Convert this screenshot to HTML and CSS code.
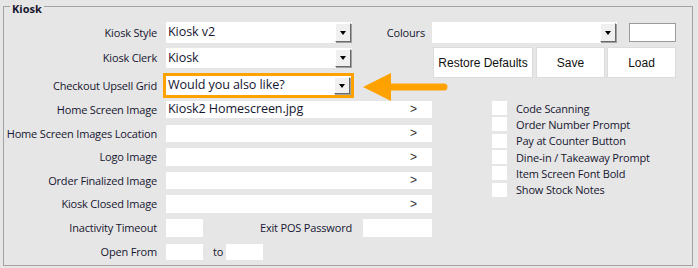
FILE: index.html
```html
<!DOCTYPE html>
<html lang="en">

<head>
  <meta charset="UTF-8">
  <title>Kiosk</title>
  <link rel="stylesheet" href="styles.css">
</head>

<body>

  <div class="group">
    <div class="group__title">Kiosk</div>

    <div class="form">
      <!-- row 1 -->
      <div class="form__label row-1">Kiosk Style</div>
      <div class="form__ctrl row-1">
        <div class="select"><span class="select__text">Kiosk v2</span><span class="select__btn"></span></div>
        <span class="form__side-label">Colours</span>
      </div>
      <div class="form__right row-1">
        <div class="select select_colours"><span class="select__text"></span><span class="select__btn"></span></div>
        <div class="swatch"></div>
      </div>

      <!-- row 2 -->
      <div class="form__label row-2">Kiosk Clerk</div>
      <div class="form__ctrl row-2">
        <div class="select select_short"><span class="select__text">Kiosk</span><span class="select__btn"></span></div>
      </div>
      <div class="buttons">
        <button class="btn btn_wide">Restore Defaults</button>
        <button class="btn">Save</button>
        <button class="btn">Load</button>
      </div>

      <!-- row 3 -->
      <div class="form__label row-3">Checkout Upsell Grid</div>
      <div class="form__ctrl row-3">
        <div class="select select_short select_highlight"><span class="select__text">Would you also like?</span><span class="select__btn"></span></div>
      </div>

      <!-- file pickers -->
      <div class="form__label row-4">Home Screen Image</div>
      <div class="form__ctrl row-4">
        <div class="picker"><span class="picker__text">Kiosk2 Homescreen.jpg</span><span class="picker__go">&gt;</span></div>
      </div>

      <div class="form__label row-5">Home Screen Images Location</div>
      <div class="form__ctrl row-5">
        <div class="picker"><span class="picker__text"></span><span class="picker__go">&gt;</span></div>
      </div>

      <div class="form__label row-6">Logo Image</div>
      <div class="form__ctrl row-6">
        <div class="picker"><span class="picker__text"></span><span class="picker__go">&gt;</span></div>
      </div>

      <div class="form__label row-7">Order Finalized Image</div>
      <div class="form__ctrl row-7">
        <div class="picker"><span class="picker__text"></span><span class="picker__go">&gt;</span></div>
      </div>

      <div class="form__label row-8">Kiosk Closed Image</div>
      <div class="form__ctrl row-8">
        <div class="picker"><span class="picker__text"></span><span class="picker__go">&gt;</span></div>
      </div>

      <ul class="checks">
        <li class="checks__item"><span class="checks__box"></span>Code Scanning</li>
        <li class="checks__item"><span class="checks__box"></span>Order Number Prompt</li>
        <li class="checks__item"><span class="checks__box"></span>Pay at Counter Button</li>
        <li class="checks__item"><span class="checks__box"></span>Dine-in / Takeaway Prompt</li>
        <li class="checks__item"><span class="checks__box"></span>Item Screen Font Bold</li>
        <li class="checks__item"><span class="checks__box"></span>Show Stock Notes</li>
      </ul>

      <!-- row 9 -->
      <div class="form__label row-9">Inactivity Timeout</div>
      <div class="form__ctrl row-9">
        <div class="field field_small"></div>
        <span class="form__side-label form__side-label_pos">Exit POS Password</span>
        <div class="field field_pass"></div>
      </div>

      <!-- row 10 -->
      <div class="form__label row-10">Open From</div>
      <div class="form__ctrl row-10">
        <div class="field field_small"></div>
        <span class="form__to">to</span>
        <div class="field field_small"></div>
      </div>
    </div>

    <!-- callout arrow -->
    <svg class="callout" width="90" height="34" viewBox="0 0 90 34">
      <polygon points="2,17 30,3 30,31" fill="#ffa200" />
      <line x1="28" y1="17" x2="83" y2="17" stroke="#ffa200" stroke-width="7" stroke-linecap="round" />
    </svg>
  </div>

</body>

</html>
```

FILE: styles.css
```css
* {
  box-sizing: border-box;
}

body {
  margin: 0;
  background-color: #e6e6e6;
  font-family: "Open Sans", "Noto Sans", sans-serif;
  font-size: 11px;
  letter-spacing: -0.18px;
  color: #161630;
}

.group {
  position: relative;
  margin: 6px 0 0 3px;
  width: 690px;
  height: 260px;
  border: 1px solid #a3a3a3;
}

.group__title {
  width: fit-content;
  height: 15px;
  margin: -6px 0 0 6px;
  padding: 0 2px;
  background-color: #e6e6e6;
  font-weight: bold;
  line-height: 15px;
  letter-spacing: 0;
}

.form {
  display: grid;
  grid-template-columns: 162px 266px 1fr;
  grid-template-rows: 26px 25px 28px 24px 23px 24px 23px 24px 25px 16px;
  margin-top: 6px;
}

.form__label {
  grid-column: 1;
  padding-right: 9px;
  text-align: right;
  white-space: nowrap;
}

.form__ctrl {
  grid-column: 2;
  display: flex;
  align-items: center;
}

.form__right {
  grid-column: 3;
  display: flex;
  align-items: center;
}

.row-1 { grid-row: 1; height: 21px; line-height: 21px; }
.row-2 { grid-row: 2; height: 20px; line-height: 20px; }
.row-3 { grid-row: 3; height: 25px; line-height: 25px; }
.row-4 { grid-row: 4; height: 17px; line-height: 17px; }
.row-5 { grid-row: 5; height: 17px; line-height: 17px; }
.row-6 { grid-row: 6; height: 18px; line-height: 18px; }
.row-7 { grid-row: 7; height: 17px; line-height: 17px; }
.row-8 { grid-row: 8; height: 18px; line-height: 18px; }
.row-9 { grid-row: 9; height: 18px; line-height: 18px; }
.row-10 { grid-row: 10; height: 16px; line-height: 16px; }

.form__side-label {
  margin-left: auto;
  padding-right: 7px;
  white-space: nowrap;
}

.form__side-label_pos {
  padding-right: 11px;
}

.form__to {
  margin: 0 3px 0 10px;
}

/* combo boxes */
.select {
  display: flex;
  align-items: center;
  width: 186px;
  height: 21px;
  background-color: #fff;
  font-size: 12.6px;
  letter-spacing: -0.1px;
}

.select_short {
  height: 20px;
}

.select_highlight {
  height: 19px;
  width: 185px;
  outline: 3px solid #ffa200;
}

.select_colours {
  width: 185px;
}

.select__text {
  flex: 1 1 auto;
  padding-left: 2px;
  white-space: nowrap;
  line-height: 1;
}

.select__btn {
  position: relative;
  width: 16px;
  height: calc(100% - 2px);
  margin-right: 1px;
  background-color: #f0f0f0;
  border-top: 1px solid #fff;
  border-left: 1px solid #fff;
  border-right: 1px solid #6a6a6a;
  border-bottom: 1px solid #6a6a6a;
  box-shadow: 1px 1px 0 #a0a0a0;
}

.select__btn::after {
  content: '';
  position: absolute;
  left: 4px;
  top: 50%;
  margin-top: -2px;
  border-left: 3.5px solid transparent;
  border-right: 3.5px solid transparent;
  border-top: 4px solid #000;
}

.swatch {
  width: 47px;
  height: 19px;
  margin-left: 12px;
  background-color: #fff;
  border: 1px solid #9a9a9a;
}

/* buttons */
.buttons {
  grid-column: 3;
  grid-row: 2 / span 2;
  align-self: start;
  display: flex;
  margin: -1px 0 0 1px;
}

.btn {
  width: 69px;
  height: 31px;
  margin-right: 2px;
  padding: 0;
  background-color: #fff;
  border: 1px solid #dcdcdc;
  font-family: "Liberation Sans", Arial, sans-serif;
  font-size: 12px;
  letter-spacing: 0;
  color: #111;
}

.btn_wide {
  width: 100px;
  margin-right: 3px;
}

/* file pickers */
.picker {
  display: flex;
  align-items: center;
  width: 266px;
  height: 100%;
  background-color: #fff;
}

.picker__text {
  flex: 1 1 auto;
  padding-left: 2px;
  font-size: 12.6px;
  letter-spacing: -0.1px;
  line-height: 1;
}

.picker__go {
  width: 22px;
  font-family: "Liberation Sans", Arial, sans-serif;
  font-size: 12px;
  letter-spacing: 0;
  color: #333;
}

.field {
  height: 100%;
  background-color: #fff;
}

.field_small {
  width: 37px;
}

.field_pass {
  width: 69px;
}

/* check boxes */
.checks {
  grid-column: 3;
  grid-row: 4 / span 7;
  margin: -1px 0 0;
  padding: 0 0 0 60px;
  list-style: none;
}

.checks__item {
  display: flex;
  align-items: center;
  height: 16.3px;
}

.checks__box {
  width: 15px;
  height: 14px;
  margin-right: 9px;
  background-color: #fff;
}

.callout {
  position: absolute;
  left: 357px;
  top: 63px;
}
```
